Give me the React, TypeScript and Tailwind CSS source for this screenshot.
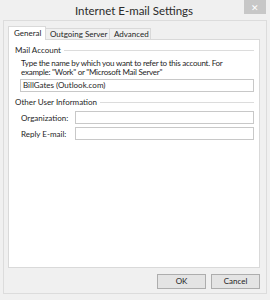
export default function App() {
  const font = { fontFamily: 'Lato, "Noto Sans", sans-serif' };
  return (
    <div className="w-[270px] h-[300px] bg-[#f0f0f0] text-[#1e1e1e] overflow-hidden" style={font}>
      {/* title bar */}
      <div className="h-[20px] flex items-start">
        <div className="w-[24px]" />
        <div className="flex-1 text-center text-[11.5px] leading-[22px] text-[#2b2b2b] whitespace-nowrap">
          Internet E-mail Settings
        </div>
        <div className="w-[22px] h-[14px] bg-[#c7c7c7] flex items-center justify-center text-white text-[9px] leading-none mr-[4px]">
          ✕
        </div>
      </div>

      {/* window body */}
      <div className="mx-[3px] h-[274px] border border-[#dcdcdc] pt-[5px] pl-[4px] pr-[6px] flex flex-col">
        {/* tabs */}
        <div className="flex items-end h-[13px] relative z-10 whitespace-nowrap text-[8px]">
          <div className="w-[38px] h-[14px] bg-white border border-b-0 border-[#d9d9d9] leading-[12px] pl-[5px] mb-[-1px]">
            General
          </div>
          <div className="w-[64px] h-[11px] bg-[#f0f0f0] border border-b-0 border-l-0 border-[#d9d9d9] leading-[11px] pl-[4px]">
            Outgoing Server
          </div>
          <div className="w-[41px] h-[11px] bg-[#f0f0f0] border border-b-0 border-l-0 border-[#d9d9d9] leading-[11px] pl-[4px]">
            Advanced
          </div>
        </div>

        {/* panel */}
        <div className="h-[229px] bg-white border border-[#d9d9d9] pl-[6px] pr-[5px] pt-[5px] text-[8px] whitespace-nowrap">
          <div className="flex items-center gap-[3px]">
            <span className="leading-[10px]">Mail Account</span>
            <div className="flex-1 h-px bg-[#dcdcdc]" />
          </div>
          <div className="pl-[6px] mt-[4px] leading-[9px] tracking-[-0.25px]">
            Type the name by which you want to refer to this account. For
            <br />
            example: "Work" or "Microsoft Mail Server"
          </div>
          <div className="ml-[5px] mt-[2px] h-[13px] border border-[#c8c8c8] leading-[11px] pl-[2px]">
            BillGates (Outlook.com)
          </div>

          <div className="flex items-center gap-[3px] mt-[5px]">
            <span className="leading-[10px]">Other User Information</span>
            <div className="flex-1 h-px bg-[#dcdcdc]" />
          </div>
          <div className="flex items-center mt-[4px] pl-[6px]">
            <span className="w-[54px]">Organization:</span>
            <div className="flex-1 h-[13px] border border-[#c8c8c8]" />
          </div>
          <div className="flex items-center mt-[3px] pl-[6px]">
            <span className="w-[54px]">Reply E-mail:</span>
            <div className="flex-1 h-[13px] border border-[#c8c8c8]" />
          </div>
        </div>

        {/* buttons */}
        <div className="flex justify-end gap-[5px] mt-[6px]">
          <button className="w-[49px] h-[15px] bg-[#e4e4e4] border border-[#adadad] text-[8px] leading-[13px] text-center">
            OK
          </button>
          <button className="w-[49px] h-[15px] bg-[#e4e4e4] border border-[#adadad] text-[8px] leading-[13px] text-center">
            Cancel
          </button>
        </div>
      </div>
    </div>
  );
}
